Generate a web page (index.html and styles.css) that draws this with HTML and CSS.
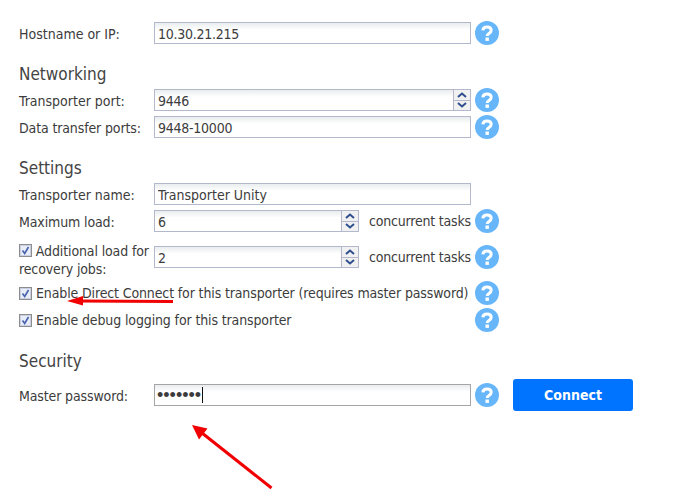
FILE: index.html
```html
<!DOCTYPE html>
<html lang="en">
<head>
<meta charset="utf-8">
<title>Transporter</title>
<link rel="stylesheet" href="styles.css">
</head>
<body>
<svg width="0" height="0" class="defs">
  <symbol id="help" viewBox="0 0 24 24">
    <circle cx="12" cy="12" r="12" fill="#68b6fa"/>
    <path d="M7.900 9.400C8 7 9.700 5.900 12 5.900c2.500 0 4.200 1.300 4.200 3.300 0 1.600-1 2.400-2.200 3.200-1.200.8-1.800 1.300-1.800 2.600" fill="none" stroke="#fff" stroke-width="3"/>
    <rect x="10.500" y="16.500" width="3.400" height="3.400" fill="#fff"/>
  </symbol>
  <symbol id="tick" viewBox="0 0 13 13">
    <rect x=".5" y=".5" width="12" height="12" fill="#dfe4f1" stroke="#8d8d8d"/>
    <rect x="1.500" y="1.500" width="10" height="10" fill="#e9edf7" stroke="#c9d0e4"/>
    <path d="M3.500 6.500l2.200 3 3.800-6.500" fill="none" stroke="#4a64b0" stroke-width="1.700"/>
  </symbol>
  <symbol id="up" viewBox="0 0 10 6"><path d="M1 5l4-3.500L9 5" fill="none" stroke="#2f4f8f" stroke-width="2"/></symbol>
  <symbol id="down" viewBox="0 0 10 6"><path d="M1 1l4 3.500L9 1" fill="none" stroke="#2f4f8f" stroke-width="2"/></symbol>
</svg>

<form class="form">
  <div class="row">
    <label class="label">Hostname or IP:</label>
    <input class="input num" type="text" value="10.30.21.215">
    <svg class="help"><use href="#help"/></svg>
  </div>

  <h2 class="heading">Networking</h2>
  <div class="row">
    <label class="label">Transporter port:</label>
    <div class="spin spin-wide">
      <input class="spin-input num" type="text" value="9446">
      <div class="spin-btns">
        <span class="spin-btn"><svg class="chev"><use href="#up"/></svg></span>
        <span class="spin-btn"><svg class="chev"><use href="#down"/></svg></span>
      </div>
    </div>
    <svg class="help"><use href="#help"/></svg>
  </div>
  <div class="row">
    <label class="label tight">Data transfer ports:</label>
    <input class="input num" type="text" value="9448-10000">
    <svg class="help"><use href="#help"/></svg>
  </div>

  <h2 class="heading">Settings</h2>
  <div class="row">
    <label class="label">Transporter name:</label>
    <input class="input" type="text" value="Transporter Unity">
  </div>
  <div class="row">
    <label class="label tight">Maximum load:</label>
    <div class="field">
      <div class="spin spin-narrow">
        <input class="spin-input" type="text" value="6">
        <div class="spin-btns">
          <span class="spin-btn"><svg class="chev"><use href="#up"/></svg></span>
          <span class="spin-btn"><svg class="chev"><use href="#down"/></svg></span>
        </div>
      </div>
      <span class="unit">concurrent tasks</span>
    </div>
    <svg class="help"><use href="#help"/></svg>
  </div>
  <div class="row">
    <label class="label label-wrap tight"><svg class="check check-inline"><use href="#tick"/></svg> Additional load for recovery jobs:</label>
    <div class="field">
      <div class="spin spin-narrow">
        <input class="spin-input" type="text" value="2">
        <div class="spin-btns">
          <span class="spin-btn"><svg class="chev"><use href="#up"/></svg></span>
          <span class="spin-btn"><svg class="chev"><use href="#down"/></svg></span>
        </div>
      </div>
      <span class="unit">concurrent tasks</span>
    </div>
    <svg class="help"><use href="#help"/></svg>
  </div>
  <div class="row">
    <label class="label label-full tight"><svg class="check"><use href="#tick"/></svg>Enable Direct Connect for this transporter (requires master password)</label>
    <svg class="help"><use href="#help"/></svg>
  </div>
  <div class="row">
    <label class="label label-full tight"><svg class="check"><use href="#tick"/></svg>Enable debug logging for this transporter</label>
    <svg class="help"><use href="#help"/></svg>
  </div>

  <h2 class="heading">Security</h2>
  <div class="row row-submit">
    <label class="label tight">Master password:</label>
    <div class="password">
      <input class="input input-focus input-secret" type="password" value="1234567">
      <span class="caret"></span>
    </div>
    <svg class="help"><use href="#help"/></svg>
    <button class="connect" type="button">Connect</button>
  </div>
</form>

<svg class="annotations" viewBox="0 0 684 502">
  <path d="M173 301.500L80 301" stroke="#f00000" stroke-width="3" fill="none"/>
  <path d="M67 301l16-5v9.500z" fill="#f00000"/>
  <path d="M271.500 488L202 433" stroke="#f00000" stroke-width="3" fill="none"/>
  <path d="M192 425l15.500 3.500-8.500 11z" fill="#f00000"/>
</svg>
</body>
</html>
```

FILE: styles.css
```css
* { box-sizing: border-box; }

html, body {
  margin: 0;
  padding: 0;
  background: #fff;
}

body {
  position: relative;
  width: 684px;
  height: 502px;
  overflow: hidden;
  font-family: "DejaVu Sans Condensed", "DejaVu Sans", sans-serif;
  font-size: 14px;
  color: #3c3c3c;
}

.defs { position: absolute; }

.form {
  display: flex;
  flex-direction: column;
  gap: 3px;
  padding: 21px 0 0 19px;
}

.heading {
  margin: 14px 0 -1px;
  height: 24px;
  font-size: 17px;
  line-height: 25px;
  font-weight: normal;
  color: #444;
}

.row {
  display: flex;
  align-items: center;
  min-height: 24px;
}

.row-submit { margin-top: 4px; }

.label {
  display: block;
  width: 135px;
  flex: none;
  padding-top: 2px;
  line-height: 18px;
}

.tight { letter-spacing: -0.13px; }

.label-wrap { padding-top: 6px; }

.label-full {
  display: flex;
  align-items: center;
  width: 452px;
  padding-top: 0;
  white-space: nowrap;
}

.input {
  width: 317px;
  height: 22px;
  padding: 2px 3px 0;
  border: 1px solid #b4b8cd;
  border-radius: 0;
  outline: none;
  background: linear-gradient(#e9edee, #fff 7px);
  font: inherit;
  color: #3c3c3c;
}

.num { letter-spacing: -0.25px; }

.input-focus { border-color: #a5a5a5; }

.input-secret {
  padding: 0 2px;
  font-family: "Liberation Sans", sans-serif;
  font-size: 18px;
}

.password {
  position: relative;
  width: 317px;
  height: 22px;
}

.caret {
  position: absolute;
  left: 48px;
  top: 3px;
  width: 1px;
  height: 16px;
  background: #111;
}

.field {
  display: flex;
  align-items: center;
  width: 317px;
}

.spin {
  display: flex;
  flex: none;
  height: 22px;
  border: 1px solid #b4b8cd;
  background: linear-gradient(#e9edee, #fff 7px);
}

.spin-wide { width: 317px; }
.spin-narrow { width: 205px; }

.spin-input {
  flex: 1;
  min-width: 0;
  padding: 2px 3px 0;
  border: 0;
  outline: none;
  background: transparent;
  font: inherit;
  color: #3c3c3c;
}

.spin-btns {
  display: flex;
  flex-direction: column;
  flex: none;
  width: 17px;
  border-left: 1px solid #b4b8cd;
}

.spin-btn {
  display: flex;
  flex: 1;
  align-items: center;
  justify-content: center;
  background: #f1f1f1;
}

.spin-btn + .spin-btn { border-top: 1px solid #b4b8cd; }

.chev {
  width: 10px;
  height: 6px;
}

.unit {
  margin-left: 10px;
  white-space: nowrap;
  letter-spacing: -0.2px;
}

.help {
  flex: none;
  width: 24px;
  height: 24px;
  margin-left: 4px;
}

.check {
  flex: none;
  width: 13px;
  height: 13px;
  margin-right: 4px;
}

.check-inline {
  margin-right: 0;
  vertical-align: -1px;
}

.connect {
  width: 120px;
  height: 32px;
  margin-left: 14px;
  border: 0;
  border-radius: 3px;
  background: #0073ff;
  color: #fff;
  font: bold 14px "DejaVu Sans Condensed", "DejaVu Sans", sans-serif;
}

.annotations {
  position: absolute;
  left: 0;
  top: 0;
  width: 684px;
  height: 502px;
  pointer-events: none;
}
```
